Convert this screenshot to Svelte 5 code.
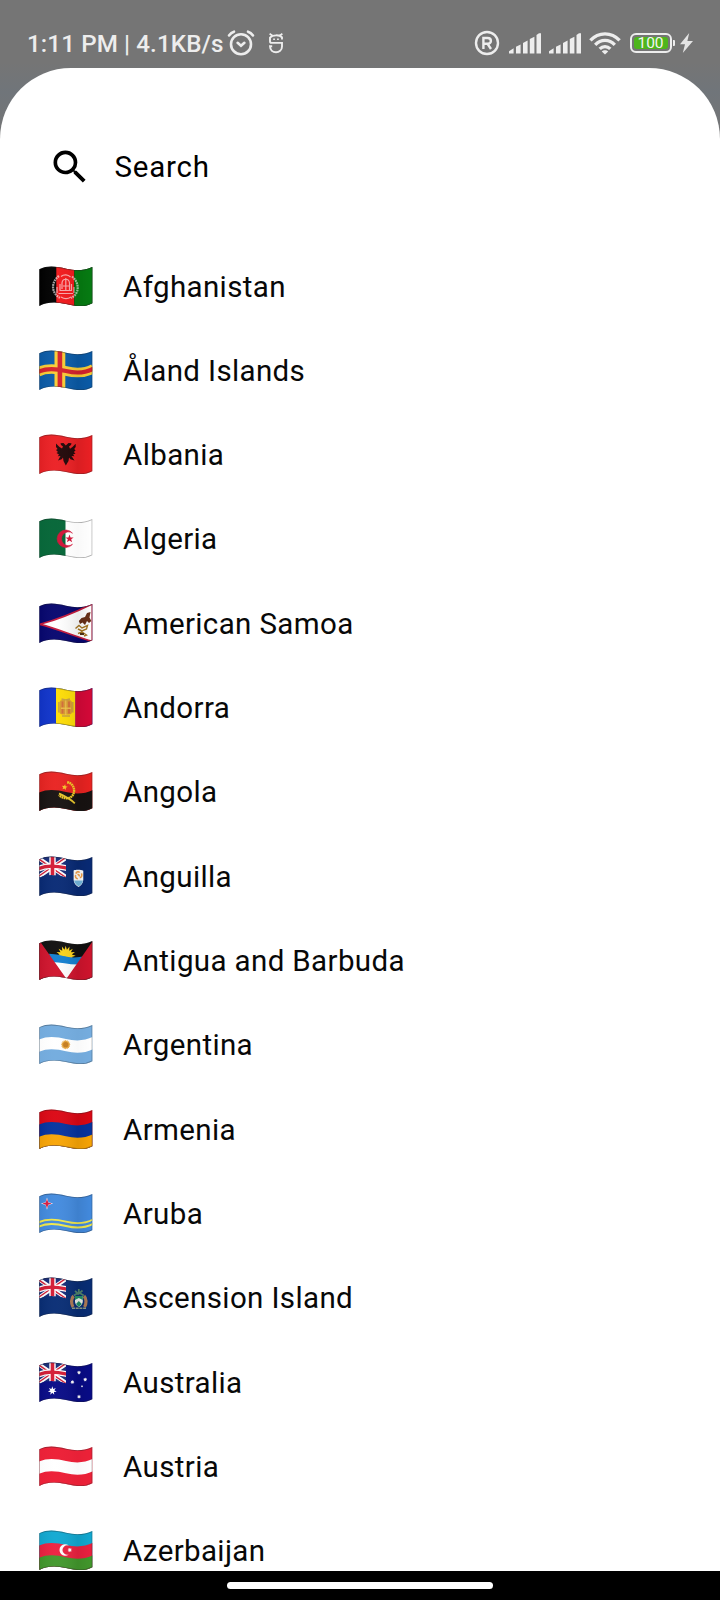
<script>
  const countries = [
    ['af', 'Afghanistan'],
    ['ax', 'Åland Islands'],
    ['al', 'Albania'],
    ['dz', 'Algeria'],
    ['as', 'American Samoa'],
    ['ad', 'Andorra'],
    ['ao', 'Angola'],
    ['ai', 'Anguilla'],
    ['ag', 'Antigua and Barbuda'],
    ['ar', 'Argentina'],
    ['am', 'Armenia'],
    ['aw', 'Aruba'],
    ['ac', 'Ascension Island'],
    ['au', 'Australia'],
    ['at', 'Austria'],
    ['az', 'Azerbaijan']
  ];

  // Waving edge shared by every flag, and the band below it.
  const wave = 'M-1 3.8C8 -.9 18 .6 27 2.8S46 5 54.5 .4';
  const body = wave + 'V60H-1Z';
  const outline = 'M.3 3.2C9 -.9 18 .6 27 2.8S45 5 53.3 1V37.2C45 41.8 36 39.7 27 37.9S9 35.5 .3 39.9Z';

  const star = (cx, cy, r, n = 5, k = 0.42, rot = -90) =>
    Array.from({ length: n * 2 }, (_, i) => {
      const a = ((rot + (i * 180) / n) * Math.PI) / 180;
      const d = i % 2 ? r * k : r;
      return `${(cx + d * Math.cos(a)).toFixed(2)},${(cy + d * Math.sin(a)).toFixed(2)}`;
    }).join(' ');
</script>

{#snippet band(y, color)}
  <path d={body} transform="translate(0 {y})" fill={color} />
{/snippet}

{#snippet stripe(y, w, color)}
  <path d={wave} transform="translate(0 {y})" fill="none" stroke={color} stroke-width={w} />
{/snippet}

{#snippet union()}
  <g clip-path="url(#canton)">
    <rect width="27" height="24" fill="#172b78" />
    <path d="M0 2.5L27 21M0 20.5L27 2" stroke="#fff" stroke-width="4" />
    <path d="M0 3.2L27 21.5M0 20L27 1.3" stroke="#d41c35" stroke-width="1.4" />
    <path d="M13.5 0V24" stroke="#fff" stroke-width="6.4" />
    <path d={wave} transform="translate(0 9.2)" fill="none" stroke="#fff" stroke-width="5.8" />
    <path d="M13.5 0V24" stroke="#d41c35" stroke-width="3.6" />
    <path d={wave} transform="translate(0 9.2)" fill="none" stroke="#d41c35" stroke-width="3.2" />
  </g>
{/snippet}

{#snippet signal()}
  <svg class="signal" viewBox="0 0 32 21" width="32" height="21" fill="#ededed">
    <path d="M0 20.5V18.2L4.6 15.2V20.5ZM7 20.5V13.8L11.6 11.4V20.5ZM14 20.5V10L18.6 7.6V20.5ZM20.8 20.5V6L25.4 3.7V20.5ZM27.5 20.5V2L30 .3H32V20.5Z" />
  </svg>
{/snippet}

<svg class="defs" width="0" height="0" aria-hidden="true">
  <defs>
    <clipPath id="cloth"><path d={outline} /></clipPath>
    <clipPath id="canton"><path d="M0 3.2C9 -.9 18 .6 27 2.8V21.3C18 19.1 9 17.6 0 21.7Z" /></clipPath>
    <linearGradient id="shade">
      <stop offset="0" stop-color="#000" stop-opacity=".06" />
      <stop offset=".3" stop-color="#fff" stop-opacity=".03" />
      <stop offset=".72" stop-color="#000" stop-opacity=".08" />
      <stop offset="1" stop-color="#000" stop-opacity="0" />
    </linearGradient>
  </defs>
</svg>

<div class="screen">
  <header class="status">
    <span class="clock">1:11 PM | 4.1KB/s</span>
    <svg class="alarm" viewBox="0 0 28 26" width="28" height="26" fill="none" stroke="#ededed" stroke-width="2.6" stroke-linecap="round">
      <circle cx="14" cy="14.2" r="10" />
      <path d="M10.6 12.8L14 15.8L17.4 12.8M2 5.5C3.4 3.5 5 2.3 7 1.7M26 5.5C24.6 3.5 23 2.3 21 1.7" />
    </svg>
    <svg class="ghost" viewBox="0 0 16 21" width="16" height="21" fill="none" stroke="#ededed" stroke-width="1.9">
      <path d="M14 6.4V4.4C12 1.6 4.4 1.6 2 4.6V8.2C2 9.4 2.6 9.9 3.6 9.9H14V13.4C14 21.2 2 21.2 2 13.2H4.2" />
      <path d="M1.6 .8L4.6 2.8M14.4 .8L11.4 2.8" stroke-width="1.7" />
      <path d="M5.2 6.2H6.9M9.1 6.2H10.8" stroke-width="1.6" />
    </svg>
    <div class="right">
      <svg class="reg" viewBox="0 0 26 26" width="26" height="26" fill="none" stroke="#ededed" stroke-width="2.4">
        <circle cx="13" cy="13" r="11" />
        <path d="M9.4 19V8H13.6C18 8 18 13.8 13.6 13.8H9.4M13.6 13.8L17 19" />
      </svg>
      {@render signal()}
      {@render signal()}
      <svg class="wifi" viewBox="0 0 32 23" width="32" height="23" fill="none" stroke="#ededed" stroke-width="3.3">
        <path d="M1.4 8.4C9.6 -.3 22.4 -.3 30.6 8.4M6.2 12.8C11.8 7 20.2 7 25.8 12.8M10.7 16.9C13.8 13.8 18.2 13.8 21.3 16.9" />
        <path d="M16 22.6L12.8 19.5C14.4 17.7 17.6 17.7 19.2 19.5Z" fill="#ededed" stroke="none" />
      </svg>
      <div class="battery"><span>100</span></div>
      <i class="nub"></i>
      <svg class="bolt" viewBox="0 0 13 20" width="13" height="20" fill="#e4e4e4"><path d="M9.2 0L0 11.3H5L2.8 20L13 8H7.4Z" /></svg>
    </div>
  </header>

  <main class="sheet">
    <div class="search">
      <svg viewBox="0 0 24 24" width="44" height="44"><path d="M15.5 14h-.79l-.28-.27A6.47 6.47 0 0 0 16 9.5 6.5 6.5 0 1 0 9.5 16c1.61 0 3.09-.59 4.23-1.57l.27.28v.79l5 4.99L20.49 19l-4.99-5zm-6 0C7.01 14 5 11.99 5 9.5S7.01 5 9.5 5 14 7.01 14 9.5 11.99 14 9.5 14z" /></svg>
      <span>Search</span>
    </div>

    <ul>
      {#each countries as [code, name]}
        <li>
          <svg class="flag" viewBox="0 0 54 42" width="54" height="42">
            <g clip-path="url(#cloth)">
              {#if code === 'af'}
                <rect width="54" height="42" fill="#000" />
                <rect x="17.3" width="18" height="42" fill="#f3191c" />
                <rect x="35.3" width="19" height="42" fill="#067c12" />
                <g fill="none" stroke="#fff" opacity=".62">
                  <path d="M20 10C11.8 16 12 27 21 31.8M33 10.5C41 17 40.5 28 32 32" stroke-width="2.2" stroke-dasharray="1.8 .7" />
                  <path d="M19.5 27.5H34M20.5 24.5H33M21 18V24M32.5 18V24M23 23V17C23.5 12 30 12 30.5 17V24M26.8 12V25M22 10.5C25 8.2 29 8.5 31.5 11M22 31C25 33 29 33 32 31M24 20H30M18 21V27M35 21V27" stroke-width="1.2" />
                </g>
              {:else if code === 'ax'}
                <rect width="54" height="42" fill="#0a5ba8" />
                {@render stripe(18.2, 9.6, '#f9cd35')}
                <rect x="15.5" width="10.8" height="42" fill="#f9cd35" />
                {@render stripe(18.2, 4.2, '#d5212d')}
                <rect x="18.6" width="4.6" height="42" fill="#d5212d" />
              {:else if code === 'al'}
                <rect width="54" height="42" fill="#ec2024" />
                <path d="M26.8 11.5L24.5 9L21.5 9.2L22 11L24 12.5L23 14.5L20.5 13L17 9.5V13L18.6 15L17 16L19 18L17.5 19L20 20.5L18.8 22.2L21.5 22L19 26.5L22.7 25.2L24 23.5L24.5 27L26.8 31.5L29.5 27L30 23.5L31.5 25.2L35.5 26.5L32.5 22L35.5 22.3L34 20.5L36.5 19.5L34.8 18L36.6 16.5L35.2 15L36.7 13V9.7L33.5 13L31 14.8L30 12.5L32 11L32.5 9.2L29.5 9Z" fill="#210708" />
              {:else if code === 'dz'}
                <rect width="54" height="42" fill="#fff" />
                <rect width="26.5" height="42" fill="#08683a" />
                <path d="M33.5 15.2A8.7 8.7 0 1 0 33.5 26.3A6.9 6.9 0 1 1 33.5 15.2Z" fill="#d3173b" stroke="#d3173b" stroke-width=".6" />
                <polygon points={star(30.5, 20.8, 4.4, 5, 0.4, -162)} fill="#d3173b" />
              {:else if code === 'as'}
                <rect width="54" height="42" fill="#06066f" />
                <path d="M1 21.3C17 17 37 9 54 .5V38.5C37 34 17 25 1 21.3Z" fill="#fff" stroke="#c5183c" stroke-width="1.7" />
                <path d="M52.7 2V38" stroke="#c5183c" stroke-width=".6" />
                <path d="M48 10L51.5 9L50.5 14.5L52.3 18L50 20L48 18L46 22L43.5 19.5L41 21L39.8 18L42.5 15L46 14Z" fill="#683018" />
                <path d="M36.5 25.5L40 22.5L43 25L48.5 22.5L47.5 26L43 28L39 26M39 30.5L43 29L47.5 32L45 33" fill="none" stroke="#a77825" stroke-width="1.4" />
                <path d="M41 31H45" stroke="#4f3114" stroke-width="1.8" />
              {:else if code === 'ad'}
                <rect width="54" height="42" fill="#1034cb" />
                <rect x="17" width="19.5" height="42" fill="#fedd06" />
                <rect x="36.3" width="18" height="42" fill="#d50838" />
                <rect x="20.5" y="13" width="12.5" height="14.5" rx="3" fill="#d89a30" />
                <path d="M19.8 15V25.5M33.8 15V25.5M23 29H31M22.5 12L26.7 13L31 12" fill="none" stroke="#c9a03c" stroke-width="1.5" />
                <path d="M23.5 14.5V20.5M30 14.5V20.5M23.5 22V26.5M30 22V26.5" stroke="#d46a38" stroke-width="1.8" />
                <path d="M26.8 13.5V28M22 21.2H32" stroke="#f3c850" stroke-width="1" />
              {:else if code === 'ao'}
                <rect width="54" height="42" fill="#e92321" />
                {@render band(18.3, '#171211')}
                <path d="M28.2 11.2C38 13 37 27.5 27.5 27.2C24.5 27.2 22 26 20 24" fill="none" stroke="#f4cd24" stroke-width="2.4" stroke-dasharray="1.8 .45" />
                <path d="M20 22.5C25 24.8 31 27.5 35.8 32.3" fill="none" stroke="#e9c72b" stroke-width="1.8" />
                <polygon points={star(25.6, 16.2, 3.1, 5, 0.42, -80)} fill="#f8ca27" />
              {:else if code === 'ai'}
                <rect width="54" height="42" fill="#082a75" />
                {@render union()}
                <path d="M34.6 14.5C37 13.5 42 13.7 44.3 14.7V24C44 27.5 41.5 30 39.5 31C37 29.5 34.8 27.5 34.6 24Z" fill="#fff" />
                <path d="M35 24.5H44C43.6 27.5 41.3 29.5 39.5 30.3C37.2 29 35.4 27 35 24.5Z" fill="#74b8df" />
                <path d="M36.8 17.6C37.6 15.6 39.6 15.2 40.6 16.6M42.4 17.4C43.4 19.4 42.6 21.4 40.8 21.6M38.8 22.8C36.8 22.4 35.8 20.6 36.8 19M38.4 18.6C39.6 18.2 40.6 19.2 40 20.4" fill="none" stroke="#f3a04a" stroke-width="1.6" />
              {:else if code === 'ag'}
                <rect width="54" height="42" fill="#100f0f" />
                <polygon points={star(26.7, 15.8, 10, 16, 0.62, -90)} fill="#fdd51c" />
                <path d="M10 13.8C18 14 23 15.8 28 16.8S40 17.5 46 16.3V25C36 27 23 24 12 22.8Z" fill="#1380d1" />
                <path d="M10 22C21 21.3 31 25.4 43 24.3V42H10Z" fill="#fff" />
                <path d="M0 0L27.4 38.8L53.8 1V42H0Z" fill="#d0142d" />
              {:else if code === 'ar'}
                <rect width="54" height="42" fill="#75addf" />
                {@render band(12.2, '#fff')}
                {@render band(24.5, '#75addf')}
                <polygon points={star(26.7, 20.7, 4.9, 16, 0.75, -90)} fill="#e5a640" />
                <circle cx="26.7" cy="20.7" r="2.6" fill="#c78024" />
              {:else if code === 'am'}
                <rect width="54" height="42" fill="#dc0714" />
                {@render band(12.2, '#05339f')}
                {@render band(24.5, '#f9a505')}
              {:else if code === 'aw'}
                <rect width="54" height="42" fill="#438bdf" />
                {@render stripe(25.8, 1.9, '#f2e94a')}
                {@render stripe(30.2, 1.9, '#f2e94a')}
                <polygon points={star(8, 10.6, 6.2, 4, 0.32, -90)} fill="#fff" />
                <polygon points={star(8, 10.6, 4.8, 4, 0.36, -90)} fill="#d91d45" />
              {:else if code === 'ac'}
                <rect width="54" height="42" fill="#082d75" />
                {@render union()}
                <path d="M39.8 12V17M36 14L39.5 17L43.5 13.5M34.8 18.5L39.8 15.5L44.8 18.5" fill="none" stroke="#50836b" stroke-width="1.7" />
                <path d="M34.6 19C32 21.5 32 26.5 34 30M45 19C47.6 21.5 47.6 26.5 45.5 30" fill="none" stroke="#ad7a55" stroke-width="3.2" />
                <path d="M36 19H43.8V25C43.2 28 41 29.5 39.8 30C38 29 36.2 27 36 25Z" fill="#e9efe9" />
                <path d="M36 19H43.8V23L39.8 21L36 23ZM37 27L39.8 24L42.8 27L39.8 30Z" fill="#249066" />
                <path d="M33 31.2H47" stroke="#8f9c86" stroke-width="1.4" stroke-dasharray="3 .7" />
              {:else if code === 'au'}
                <rect width="54" height="42" fill="#080b87" />
                {@render union()}
                <g fill="#fff">
                  <polygon points={star(13.3, 28.8, 4.5, 7, 0.46, -90)} />
                  <polygon points={star(40, 10.5, 2.1, 7, 0.55, -90)} />
                  <polygon points={star(33.4, 20, 2.1, 7, 0.55, -90)} />
                  <polygon points={star(46.2, 17.5, 2.1, 7, 0.55, -90)} />
                  <polygon points={star(40, 34.7, 2.1, 7, 0.55, -90)} />
                  <polygon points={star(43, 24.3, 1.2, 5, 0.5, -90)} />
                </g>
              {:else if code === 'at'}
                <rect width="54" height="42" fill="#ed2138" />
                {@render band(12.2, '#fff')}
                {@render band(24.5, '#ed2138')}
              {:else if code === 'az'}
                <rect width="54" height="42" fill="#11a9d2" />
                {@render band(12.2, '#ec2140')}
                {@render band(24.5, '#42982c')}
                <path d="M29.8 15.6A5.7 5.7 0 1 0 29.8 24.4A4.7 4.7 0 1 1 29.8 15.6Z" fill="#fff" />
                <polygon points={star(30.8, 20, 2.3, 8, 0.55, -90)} fill="#fff" />
              {/if}
              <rect width="54" height="42" fill="url(#shade)" opacity={code === 'dz' || code === 'at' || code === 'ar' ? 0.3 : 1} />
              <path d={outline} fill="none" stroke="#222" stroke-opacity=".35" stroke-width="1.4" />
            </g>
          </svg>
          <span>{name}</span>
        </li>
      {/each}
    </ul>
  </main>

  <footer><i></i></footer>
</div>

<style>
  :global(body) { margin: 0; background: #fff; }
  .defs { display: block; }
  .screen {
    width: 720px;
    height: 1600px;
    display: flex;
    flex-direction: column;
    overflow: hidden;
    font-family: Roboto, sans-serif;
    color: #080808;
    background: linear-gradient(#757575 62px, #70757a 92px, #757575 140px);
  }
  svg { display: block; flex: none; }
  .status {
    flex: none;
    box-sizing: border-box;
    height: 68.4px;
    padding: 18px 27px 0 27px;
    display: flex;
    align-items: center;
    color: #ededed;
  }
  .clock {
    width: 200px;
    padding-top: 1px;
    font-size: 24.2px;
    font-weight: 500;
    letter-spacing: 0.1px;
    white-space: nowrap;
    line-height: 30px;
  }
  .ghost { margin-left: 12.5px; }
  .right { margin-left: auto; display: flex; align-items: center; }
  .reg { margin-right: 9px; }
  .signal { margin-right: 8px; }
  .battery {
    box-sizing: border-box;
    width: 42px;
    height: 20.5px;
    margin-left: 9px;
    padding: 2px;
    border: 2px solid #ededed;
    border-radius: 6px;
  }
  .battery span {
    display: block;
    height: 12.5px;
    border-radius: 3px;
    background: #4eb51c;
    color: #f4f4f4;
    font-size: 15.5px;
    line-height: 13.5px;
    text-align: center;
  }
  .nub { width: 2.5px; height: 6px; margin-left: 1px; background: #ededed; border-radius: 0 1px 1px 0; }
  .bolt { margin-left: 5px; }
  .sheet {
    flex: 1;
    min-height: 0;
    overflow: hidden;
    background: #fff;
    border-radius: 71px 71px 0 0;
    font-size: 29.5px;
    letter-spacing: 0.37px;
  }
  .search {
    height: 44px;
    padding: 76.4px 0 55.6px 47.6px;
    display: flex;
    align-items: center;
    gap: 22.9px;
    color: #000;
    letter-spacing: 0.8px;
  }
  ul { list-style: none; margin: 0; padding: 0; }
  li {
    height: 84.32px;
    padding-left: 38.7px;
    display: flex;
    align-items: center;
    gap: 30.4px;
    white-space: nowrap;
  }
  footer {
    flex: none;
    height: 29.3px;
    background: #000;
    display: flex;
    align-items: center;
    justify-content: center;
  }
  footer i { width: 266px; height: 6.5px; border-radius: 4px; background: #fff; }
</style>
